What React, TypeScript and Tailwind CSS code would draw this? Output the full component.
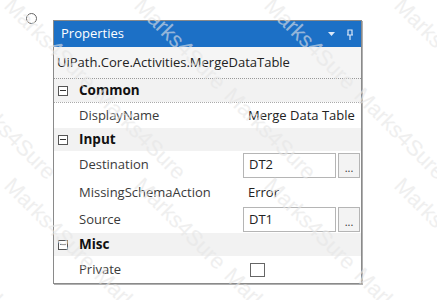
import React from 'react'

// Property grid panel (UiPath MergeDataTable) with watermark overlay.

function Expander() {
  return (
    <div className="w-[10px] h-[10px] border border-[#555] bg-white flex items-center justify-center">
      <div className="w-[6px] h-px bg-[#333]" />
    </div>
  )
}

function Category({ label, h }: { label: string; h: string }) {
  return (
    <div className={`flex items-center bg-[#f2f2f2] ${h}`}>
      <div className="w-[25px] pl-[4px] flex items-center">
        <Expander />
      </div>
      <span className="font-bold text-[13.5px] text-[#111]">{label}</span>
    </div>
  )
}

function Row({ name, h, children }: { name: string; h: string; children?: React.ReactNode }) {
  return (
    <div className={`flex items-center ${h}`}>
      <div className="w-[189px] pl-[25px] text-[13px] text-[#3a3a3a]">{name}</div>
      <div className="flex-1 flex items-center text-[13px] text-[#222]">{children}</div>
    </div>
  )
}

function TextBox({ value }: { value: string }) {
  return (
    <div className="flex items-center gap-[2px]">
      <div className="w-[93px] h-[25px] border border-[#b5b5b5] bg-white flex items-center px-[5px]">
        {value}
      </div>
      <div className="w-[22px] h-[25px] border border-[#b5b5b5] bg-[#f3f3f3] flex items-end justify-center pb-[4px] text-[11px] leading-none text-[#333]">
        ...
      </div>
    </div>
  )
}

const marks = [
  [-20, -10], [110, -10], [240, -10], [370, -10],
  [-60, 80], [70, 80], [200, 80], [330, 80],
  [-20, 170], [110, 170], [240, 170], [370, 170],
  [-60, 260], [70, 260], [200, 260], [330, 260],
]

export default function App() {
  return (
    <div className="relative w-[437px] h-[300px] bg-white overflow-hidden font-['Open_Sans',sans-serif]">
      <div className="flex items-start pt-[13px] pl-[26px] gap-[16px]">
        <div className="w-[11px] h-[11px] rounded-full border border-[#666] bg-white" />
        <div className="mt-[7px] w-[309px] border border-[#8a8a8a] shadow-[1px_1px_0_#b0b0b0] bg-white">
          <div className="h-[26px] bg-[#1c70c6] flex items-center justify-between pl-[7px] pr-[8px]">
            <span className="text-white text-[13px]">Properties</span>
            <div className="flex items-center gap-[12px]">
              <svg width="7" height="4" viewBox="0 0 7 4"><path d="M0 0h7L3.5 4z" fill="#dbe8f8" /></svg>
              <svg width="6" height="11" viewBox="0 0 6 11">
                <path d="M1 1h4v5H1z M0 6h6 M3 6v5" stroke="#dbe8f8" strokeWidth="1.2" fill="none" />
              </svg>
            </div>
          </div>
          <div className="h-[32px] bg-[#f5f5f5] flex items-center pl-[3px] text-[13px] text-[#222] border-b border-dotted border-[#999]">
            UiPath.Core.Activities.MergeDataTable
          </div>
          <div className="border-b border-dotted border-[#aaa]">
            <Category label="Common" h="h-[23px]" />
          </div>
          <Row name="DisplayName" h="h-[25px]">
            <span className="pl-[5px]">Merge Data Table</span>
          </Row>
          <Category label="Input" h="h-[23px]" />
          <Row name="Destination" h="h-[28px]">
            <TextBox value="DT2" />
          </Row>
          <Row name="MissingSchemaAction" h="h-[27px]">
            <span className="pl-[5px]">Error</span>
          </Row>
          <Row name="Source" h="h-[27px]">
            <TextBox value="DT1" />
          </Row>
          <Category label="Misc" h="h-[23px]" />
          <Row name="Private" h="h-[27px]">
            <div className="ml-[7px] w-[15px] h-[14px] border border-[#666] bg-white" />
          </Row>
        </div>
      </div>
      <div className="absolute inset-0 pointer-events-none">
        {marks.map(([x, y], i) => (
          <span
            key={i}
            className="absolute text-[22px] text-[#e6e6e6] rotate-45 origin-top-left whitespace-nowrap font-['Liberation_Sans',sans-serif] opacity-60"
            style={{ left: x + 40, top: y }}
          >
            Marks4Sure
          </span>
        ))}
      </div>
    </div>
  )
}
